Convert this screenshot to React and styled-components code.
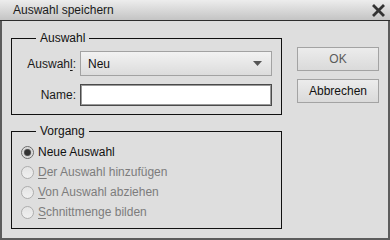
import React from 'react';
import styled, { createGlobalStyle } from 'styled-components';

const GlobalStyle = createGlobalStyle`
  html, body {
    margin: 0;
    padding: 0;
    background: #dedede;
  }
  body {
    font-family: "Liberation Sans", Arial, sans-serif;
    font-size: 12px;
    color: #111;
  }
`;

const Window = styled.div`
  box-sizing: border-box;
  width: 390px;
  height: 240px;
  background: #dedede;
  border: 2px solid #5c5c5c;
  border-top: none;
  display: flex;
  flex-direction: column;
`;

const TitleBar = styled.div`
  box-sizing: border-box;
  height: 21px;
  flex: none;
  margin: 0 -2px;
  padding: 0 5px 0 13px;
  display: flex;
  align-items: center;
  justify-content: space-between;
  background: linear-gradient(#ededed, #c4c4c4);
  border-bottom: 1px solid #2e2e2e;
  color: #1a1a1a;
  font-size: 12px;
`;

const CloseIcon = () => (
  <svg width="13" height="13" viewBox="0 0 13 13">
    <path d="M2 2 L11 11 M11 2 L2 11" stroke="#333" strokeWidth="2.8" strokeLinecap="square" />
  </svg>
);

const Body = styled.div`
  display: flex;
  gap: 15px;
  padding: 10px 0 0 9px;
`;

const LeftCol = styled.div`
  width: 271px;
  display: flex;
  flex-direction: column;
  gap: 9px;
`;

const Group = styled.fieldset`
  box-sizing: border-box;
  margin: 0;
  min-width: 0;
  border: 1px solid #111;
  padding: ${p => p.$pad};
`;

const Legend = styled.legend`
  margin-left: 15px;
  padding: 0 4px;
  line-height: 14px;
  font-size: 12px;
  color: #111;
`;

const FormGrid = styled.div`
  display: grid;
  grid-template-columns: 55px 192px;
  column-gap: 4px;
  row-gap: 8px;
  align-items: center;
`;

const Label = styled.span`
  text-align: right;
  color: #1a1a1a;
  white-space: nowrap;
`;

const Key = styled.u`
  text-underline-offset: 2px;
`;

const Select = styled.div`
  box-sizing: border-box;
  height: 25px;
  display: flex;
  align-items: center;
  justify-content: space-between;
  padding: 0 9px 0 7px;
  border: 1px solid #a2a2a2;
  background: linear-gradient(#f2f2f2, #dcdcdc);
  color: #111;
`;

const Arrow = () => (
  <svg width="9" height="5" viewBox="0 0 9 5">
    <path d="M0 0 H9 L4.5 5 Z" fill="#555" />
  </svg>
);

const TextInput = styled.div`
  box-sizing: border-box;
  height: 22px;
  background: #fff;
  border: 1px solid #4a4a4a;
  box-shadow: inset 0 0 0 1px #9a9a9a;
`;

const RadioList = styled.div`
  display: flex;
  flex-direction: column;
`;

const RadioRow = styled.div`
  height: 20px;
  display: flex;
  align-items: center;
  gap: 4px;
  color: ${p => (p.$disabled ? '#7c7c7c' : '#111')};
`;

const RadioDot = styled.span`
  box-sizing: border-box;
  width: 13px;
  height: 13px;
  border-radius: 50%;
  flex: none;
  border: 1px solid ${p => (p.$checked ? '#6a6a6a' : '#adadad')};
  background: ${p =>
    p.$checked
      ? 'radial-gradient(circle, #333 0 2.6px, #707070 3.4px, #d0d0d0 4px, #ececec 6px)'
      : 'linear-gradient(#e4e4e4, #f0f0f0)'};
`;

const ButtonCol = styled.div`
  display: flex;
  flex-direction: column;
  gap: 8px;
  padding-top: 16px;
`;

const Button = styled.div`
  box-sizing: border-box;
  width: 82px;
  height: 24px;
  display: flex;
  align-items: center;
  justify-content: center;
  border: 1px solid #a3a3a3;
  background: linear-gradient(#ececec, #dadada);
  color: ${p => (p.$muted ? '#5a5a5a' : '#111')};
`;

const options = [
  { key: 'N', rest: 'eue Auswahl', checked: true, underline: false },
  { key: 'D', rest: 'er Auswahl hinzufügen', disabled: true, underline: true },
  { key: 'V', rest: 'on Auswahl abziehen', disabled: true, underline: true },
  { key: 'S', rest: 'chnittmenge bilden', disabled: true, underline: true },
];

export default function App() {
  return (
    <>
      <GlobalStyle />
      <Window>
        <TitleBar>
          <span>Auswahl speichern</span>
          <CloseIcon />
        </TitleBar>
        <Body>
          <LeftCol>
            <Group $pad="6px 8px 8px 9px">
              <Legend>Auswahl</Legend>
              <FormGrid>
                <Label>Auswah<Key>l</Key>:</Label>
                <Select>
                  <span>Neu</span>
                  <Arrow />
                </Select>
                <Label>Name:</Label>
                <TextInput />
              </FormGrid>
            </Group>
            <Group $pad="4px 8px 6px 9px">
              <Legend>Vorgang</Legend>
              <RadioList>
                {options.map(o => (
                  <RadioRow key={o.rest} $disabled={o.disabled}>
                    <RadioDot $checked={o.checked} />
                    <span>
                      {o.underline ? <Key>{o.key}</Key> : o.key}
                      {o.rest}
                    </span>
                  </RadioRow>
                ))}
              </RadioList>
            </Group>
          </LeftCol>
          <ButtonCol>
            <Button $muted>OK</Button>
            <Button>Abbrechen</Button>
          </ButtonCol>
        </Body>
      </Window>
    </>
  );
}
